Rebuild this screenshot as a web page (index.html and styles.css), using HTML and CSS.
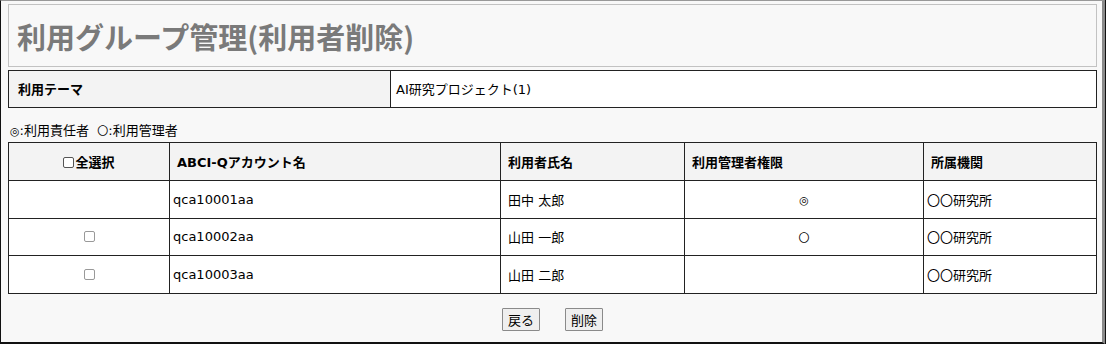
FILE: index.html
```html
<!DOCTYPE html>
<html lang="ja">
<head>
    <meta charset="UTF-8">
    <title>利用グループ管理(利用者削除)</title>
    <link rel="stylesheet" href="styles.css">
</head>
<body>
    <div class="page">
        <div class="title-box">
            <h1>利用グループ管理(利用者削除)</h1>
        </div>

        <table class="theme">
            <tr>
                <th>利用テーマ</th>
                <td>AI研究プロジェクト(1)</td>
            </tr>
        </table>

        <p class="legend"><span class="mark">◎</span>:利用責任者&nbsp;&nbsp;<span class="mark">〇</span>:利用管理者</p>

        <table class="users">
            <colgroup>
                <col class="c-check">
                <col class="c-account">
                <col class="c-name">
                <col class="c-role">
                <col class="c-org">
            </colgroup>
            <tr>
                <th class="center"><input type="checkbox" class="chk head-chk">全選択</th>
                <th>ABCI-Qアカウント名</th>
                <th>利用者氏名</th>
                <th>利用管理者権限</th>
                <th>所属機関</th>
            </tr>
            <tr>
                <td></td>
                <td class="tight">qca10001aa</td>
                <td>田中 太郎</td>
                <td class="center"><span class="mark">◎</span></td>
                <td class="tight">〇〇研究所</td>
            </tr>
            <tr>
                <td class="center"><input type="checkbox" class="chk"></td>
                <td class="tight">qca10002aa</td>
                <td>山田 一郎</td>
                <td class="center"><span class="mark">〇</span></td>
                <td class="tight">〇〇研究所</td>
            </tr>
            <tr>
                <td class="center"><input type="checkbox" class="chk"></td>
                <td class="tight">qca10003aa</td>
                <td>山田 二郎</td>
                <td></td>
                <td class="tight">〇〇研究所</td>
            </tr>
        </table>

        <div class="actions">
            <button type="button">戻る</button>
            <button type="button">削除</button>
        </div>
    </div>
</body>
</html>
```

FILE: styles.css
```css
body {
    margin: 0;
    background-color: #ffffff;
    font-family: 'DejaVu Sans', 'Noto Sans CJK JP', sans-serif;
    font-size: 13px;
    color: #000000;
}

.page {
    box-sizing: border-box;
    width: 1105px;
    height: 344px;
    padding: 3px 5px 0 7px;
    background-color: #f8f8f8;
    border-left: 1px solid #111111;
    border-top: 1px solid #999999;
    border-right: 3px solid #8a8a8a;
    border-bottom: 2px solid #111111;
    box-shadow: 1px 0 0 #111111;
}

.title-box {
    box-sizing: border-box;
    height: 63px;
    border: 1px solid #c2c2c2;
    background-color: #f8f8f8;
    display: flex;
    align-items: center;
    padding-left: 8px;
}

h1 {
    margin: 0;
    font-family: 'Noto Sans CJK JP', sans-serif;
    font-size: 29px;
    font-weight: bold;
    color: #7a7a7a;
}

table {
    width: 100%;
    border-collapse: collapse;
}

th, td {
    border: 1px solid #222222;
    text-align: left;
    padding: 0 0 0 7px;
}

th {
    background-color: #f3f3f3;
    font-weight: bold;
}

td {
    background-color: #ffffff;
}

.theme {
    margin-top: 3px;
}

.theme th, .theme td {
    height: 34px;
    padding-bottom: 2px;
}

.theme th {
    width: 372px;
    padding-left: 9px;
}

.theme td {
    padding-left: 5px;
}

.legend {
    margin: 15px 0 3px 2px;
    line-height: 15px;
}

.mark {
    font-size: 11px;
}

.users td {
    height: 36.6px;
}

.users tr:first-child th {
    height: 37px;
}

.users td.tight {
    padding-left: 3px;
}

.users .center {
    text-align: center;
    padding-left: 0;
}

.c-check { width: 161px; }
.c-account { width: 331px; }
.c-name { width: 184px; }
.c-role { width: 239px; }

.chk {
    -webkit-appearance: none;
    appearance: none;
    width: 11px;
    height: 11px;
    margin: 0;
    vertical-align: -1px;
    border: 1px solid #999999;
    border-radius: 2px;
    background-color: #ffffff;
}

.head-chk {
    border-color: #555555;
    margin-right: 1px;
}

.actions {
    display: flex;
    justify-content: center;
    gap: 25px;
    margin-top: 14px;
}

button {
    font-family: 'Noto Sans CJK JP', sans-serif;
    font-size: 13px;
    height: 23px;
    padding: 0 5px;
    background-color: #efefef;
    border: 1px solid #8a8a8a;
    border-radius: 1px;
    color: #000000;
    line-height: 19px;
}
```
